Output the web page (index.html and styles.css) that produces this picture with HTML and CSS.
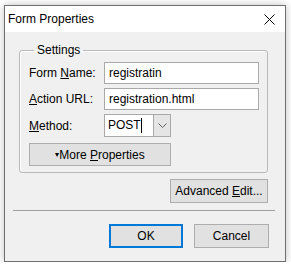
FILE: index.html
```html
<!DOCTYPE html>
<html lang="en">
<head>
  <meta charset="UTF-8" />
  <title>Form Properties</title>
  <link rel="stylesheet" href="styles.css">
</head>
<body>
  <div class="window">
    <div class="titlebar">
      <span class="title">Form Properties</span>
      <svg class="close" width="11" height="11" viewBox="0 0 11 11">
        <path d="M0.5 0.5 L10.5 10.5 M10.5 0.5 L0.5 10.5" stroke="#000" stroke-width="1" fill="none" />
      </svg>
    </div>

    <div class="dialog">
      <fieldset class="group">
        <legend>Settings</legend>
        <div class="grid">
          <label>Form <u>N</u>ame:</label>
          <div class="textbox">registratin</div>

          <label><u>A</u>ction URL:</label>
          <div class="textbox">registration.html</div>

          <label><u>M</u>ethod:</label>
          <div class="combo">
            <div class="combo-text"><span>POST</span><span class="caret"></span></div>
            <div class="combo-btn">
              <svg width="9" height="5" viewBox="0 0 9 5">
                <path d="M0.5 0.5 L4.5 4.5 L8.5 0.5" stroke="#606060" fill="none" />
              </svg>
            </div>
          </div>

          <button class="btn more"><span class="tri">&#9662;</span>More <u>P</u>roperties</button>
        </div>
      </fieldset>

      <div class="row-right">
        <button class="btn adv">Advanced <u>E</u>dit...</button>
      </div>

      <div class="sep"></div>

      <div class="footer">
        <button class="btn ok">OK</button>
        <button class="btn">Cancel</button>
      </div>
    </div>
  </div>
</body>
</html>
```

FILE: styles.css
```css
body {
  margin: 0;
  background: #ffffff;
  font-family: "Liberation Sans", Arial, sans-serif;
  font-size: 12px;
  color: #000;
}

.window {
  margin: 5px 0 0 4px;
  width: 280px;
  height: 255px;
  border: 1px solid #6f6f6f;
  background: #f0f0f0;
  box-shadow: 0 0 8px rgba(0, 0, 0, 0.25);
  display: flex;
  flex-direction: column;
}

.titlebar {
  height: 26px;
  background: #fff;
  display: flex;
  align-items: center;
  justify-content: space-between;
  padding: 0 10px 0 3px;
}

.title { font-size: 12px; }
.close { display: block; }

.dialog {
  padding-top: 10px;
}

.group {
  margin: 0 17px 0 14px;
  padding: 4px 8px 6px 9px;
  border: 1px solid #b9b9b9;
  border-radius: 3px;
  box-shadow: inset 1px 1px 0 #fff;
}

.group legend {
  padding: 0 3px;
  margin-left: 5px;
  line-height: 16px;
}

.grid {
  display: grid;
  grid-template-columns: 75px 155px;
  row-gap: 4px;
  align-items: center;
}

.grid label { line-height: 14px; }

.textbox {
  height: 20px;
  line-height: 20px;
  border: 1px solid #a9a9a9;
  background: #fff;
  padding-left: 4px;
  white-space: nowrap;
}

.combo {
  display: flex;
  width: 65px;
  height: 21px;
  border: 1px solid #a9a9a9;
}

.combo-text {
  width: 45px;
  background: #fff;
  line-height: 21px;
  padding-left: 3px;
  display: flex;
  align-items: center;
}

.caret {
  display: block;
  width: 1px;
  height: 15px;
  background: #000;
}

.combo-btn {
  flex: 1;
  background: #e5e5e5;
  border-left: 1px solid #a9a9a9;
  display: flex;
  align-items: center;
  justify-content: center;
}

.btn {
  font-family: inherit;
  font-size: 12px;
  color: #000;
  background: #e1e1e1;
  border: 1px solid #adadad;
  height: 24px;
  padding: 0;
  margin: 0;
}

.more {
  grid-column: 1 / span 2;
  width: 142px;
  height: 23px;
  margin-top: 2px;
}

.tri { font-size: 8px; vertical-align: 2px; }

.row-right {
  display: flex;
  justify-content: flex-end;
  margin: 6px 17px 0 0;
}

.adv { width: 98px; }

.sep {
  height: 1px;
  background: #a0a0a0;
  margin: 7px 10px 0 8px;
}

.footer {
  display: flex;
  justify-content: flex-end;
  gap: 11px;
  margin: 13px 16px 0 0;
}

.footer .btn { width: 75px; }

.ok {
  border: 2px solid #0078d7;
  width: 74px !important;
}
```
